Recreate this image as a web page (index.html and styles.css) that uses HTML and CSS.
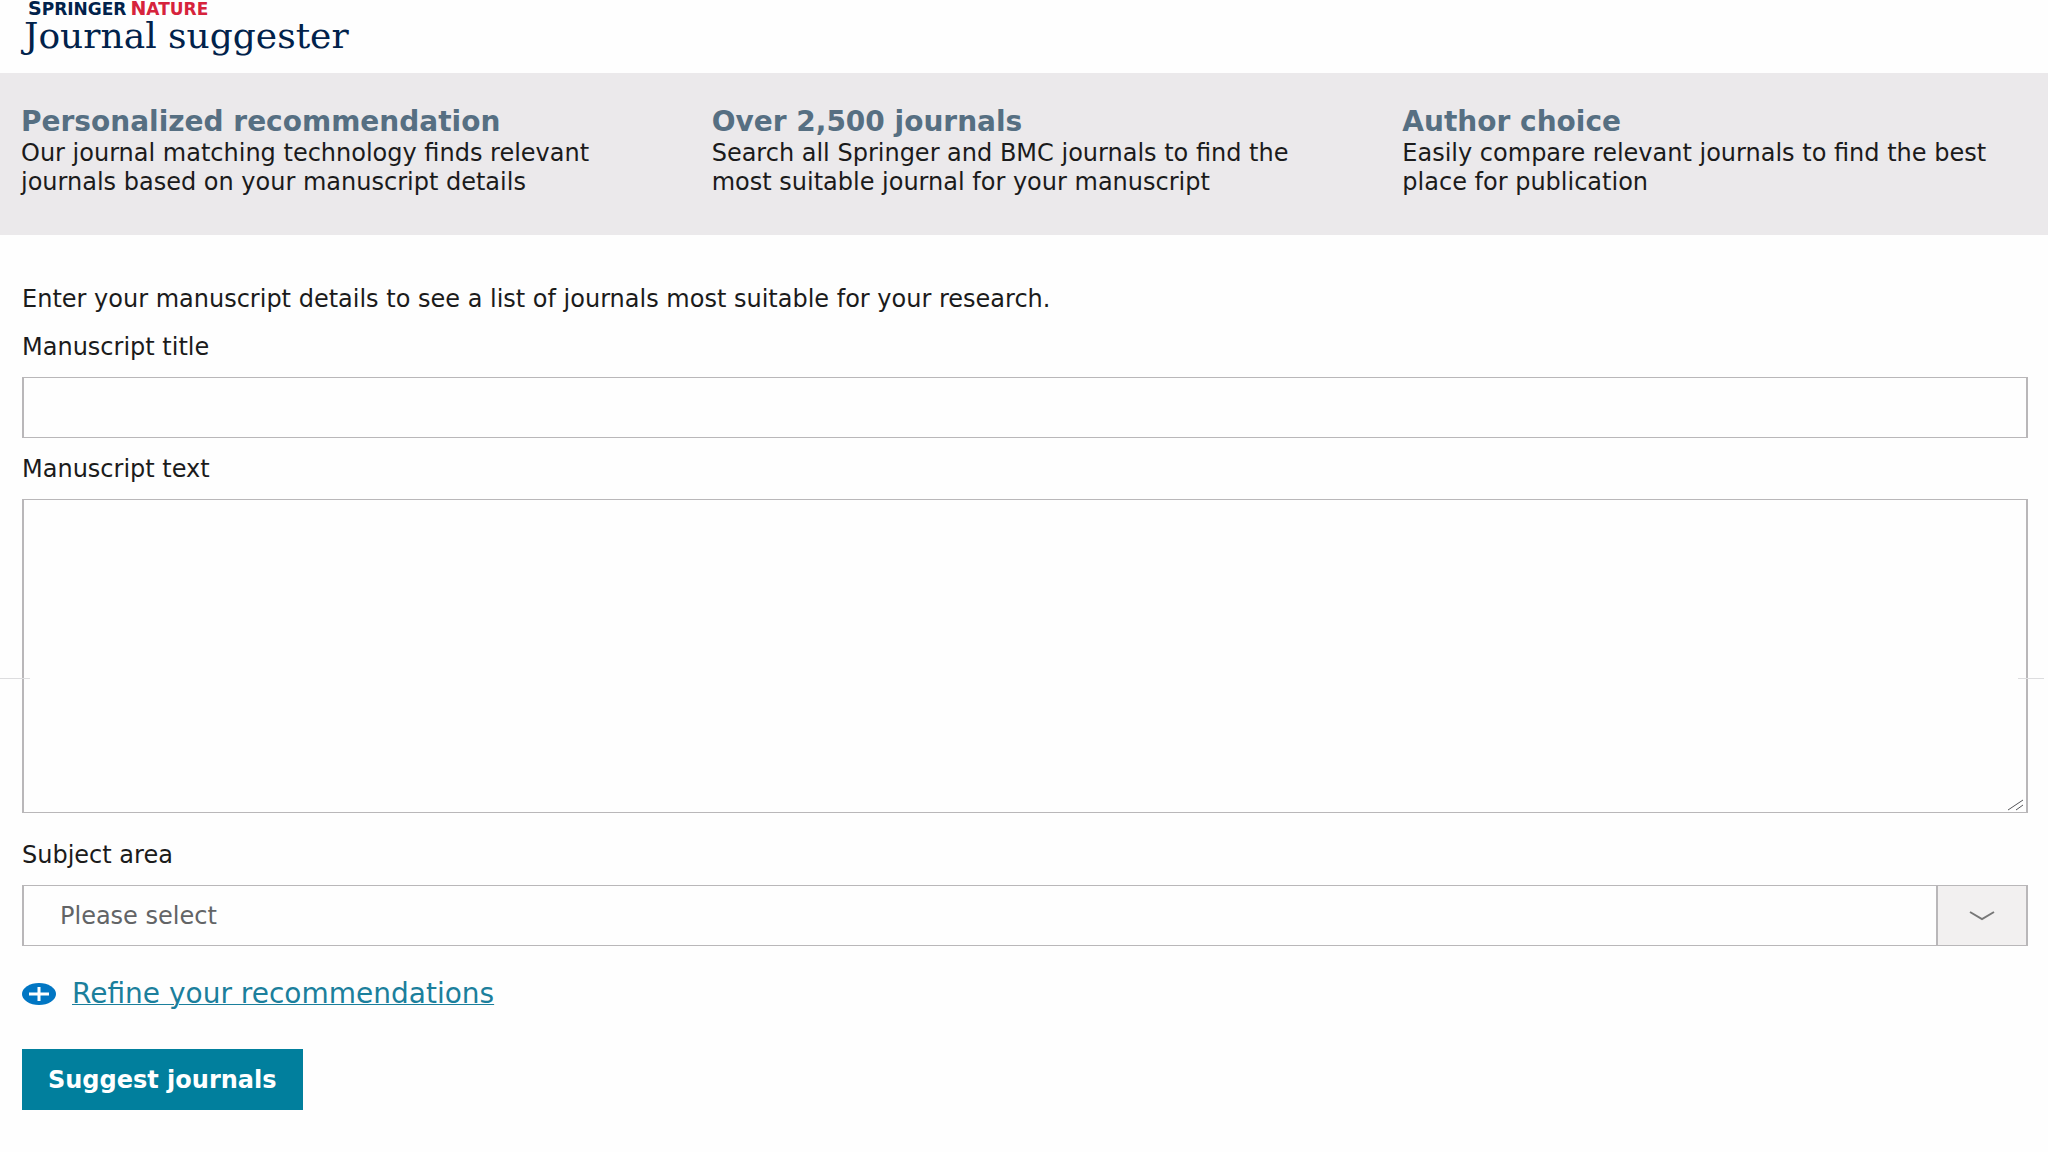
FILE: index.html
```html
<!DOCTYPE html>
<html lang="en">
<head>
    <meta charset="UTF-8">
    <meta name="viewport" content="width=device-width, initial-scale=1.0">
    <title>Journal suggester</title>
    <link rel="stylesheet" href="styles.css">
</head>
<body>
    <header class="site-header">
        <div class="brand">
            <span><span class="brand-initial">S</span>PRINGER</span>
            <span class="brand-nature"><span class="brand-initial">N</span>ATURE</span>
        </div>
        <h1 class="site-title">Journal suggester</h1>
    </header>

    <!-- Benefits band -->
    <section class="benefits">
        <div class="benefit">
            <h2>Personalized recommendation</h2>
            <p>Our journal matching technology finds relevant journals based on your manuscript details</p>
        </div>
        <div class="benefit">
            <h2>Over 2,500 journals</h2>
            <p>Search all Springer and BMC journals to find the most suitable journal for your manuscript</p>
        </div>
        <div class="benefit">
            <h2>Author choice</h2>
            <p>Easily compare relevant journals to find the best place for publication</p>
        </div>
    </section>

    <!-- Manuscript form -->
    <form class="manuscript-form">
        <p class="intro">Enter your manuscript details to see a list of journals most suitable for your research.</p>

        <label for="title">Manuscript title</label>
        <input class="field" type="text" id="title" name="title">

        <label for="text">Manuscript text</label>
        <div class="text-wrap">
            <textarea class="field" id="text" name="text"></textarea>
            <svg class="resize-grip" width="18" height="12" viewBox="0 0 18 12" aria-hidden="true">
                <path d="M1 11 L16 1 M9 11 L16 6"></path>
            </svg>
        </div>

        <label for="subject">Subject area</label>
        <div class="select-wrap">
            <select class="field" id="subject" name="subject">
                <option>Please select</option>
            </select>
            <span class="select-arrow">
                <svg width="26" height="10" viewBox="0 0 26 10" aria-hidden="true">
                    <path d="M1 1 L13 8 L25 1"></path>
                </svg>
            </span>
        </div>

        <div class="refine">
            <svg width="34" height="22" viewBox="0 0 34 22" aria-hidden="true">
                <ellipse cx="17" cy="11" rx="17" ry="11"></ellipse>
                <path d="M7 11 H27 M17 4 V18"></path>
            </svg>
            <a href="#refine">Refine your recommendations</a>
        </div>

        <button class="submit-button" type="submit">Suggest journals</button>
    </form>
</body>
</html>
```
FILE: styles.css
```css
/* Reset CSS */
* {
    margin: 0;
    padding: 0;
    box-sizing: border-box;
}
body {
    font-family: "DejaVu Sans", sans-serif;
    font-size: 24px;
    line-height: 29px;
    color: #1b1b1b;
    background: #fefefe;
}
/* Header */
.site-header {
    padding: 0 24px 18px;
    color: #01224b;
}
.brand {
    display: flex;
    align-items: baseline;
    gap: 4px;
    padding-left: 4px;
    font-size: 17px;
    font-weight: bold;
    line-height: 16px;
}
.brand-initial {
    font-size: 19px;
}
.brand-nature {
    color: #d6233c;
}
.site-title {
    font-family: "DejaVu Serif", serif;
    font-size: 36px;
    font-weight: normal;
    line-height: 38px;
}
/* Benefits band */
.benefits {
    display: grid;
    grid-template-columns: repeat(3, 1fr);
    gap: 66px;
    padding: 32px 21px 38px;
    background: #ebe9eb;
}
.benefit h2 {
    font-size: 28px;
    line-height: 34px;
    color: #566f82;
}
/* Form */
.manuscript-form {
    padding: 50px 20px 42px 22px;
}
.intro {
    margin-bottom: 19px;
}
.manuscript-form label {
    display: block;
    margin-bottom: 15px;
}
.field {
    display: block;
    width: 100%;
    height: 61px;
    border: solid #b9b7b9;
    border-width: 1px 2px;
    background: #fefefe;
    font-family: inherit;
    font-size: 24px;
    color: #626466;
}
input.field {
    margin-bottom: 17px;
    padding: 0 16px;
}
/* Manuscript text box */
.text-wrap {
    position: relative;
    margin-bottom: 28px;
}
textarea.field {
    height: 314px;
    padding: 16px;
    resize: none;
}
.text-wrap::before,
.text-wrap::after {
    content: "";
    position: absolute;
    top: 179px;
    height: 1px;
    background: #dddddf;
}
.text-wrap::before {
    left: -22px;
    width: 30px;
}
.text-wrap::after {
    right: -16px;
    width: 26px;
}
.resize-grip {
    position: absolute;
    right: 3px;
    bottom: 2px;
    fill: none;
    stroke: #55565a;
}
/* Subject drop-down */
.select-wrap {
    position: relative;
    margin-bottom: 33px;
}
select.field {
    padding: 0 110px 0 36px;
    border-radius: 0;
    appearance: none;
}
.select-arrow {
    position: absolute;
    top: 1px;
    right: 2px;
    bottom: 1px;
    width: 90px;
    display: flex;
    align-items: center;
    justify-content: center;
    border-left: 2px solid #b9b7b9;
    background: #f2f0f0;
    pointer-events: none;
}
.select-arrow path {
    fill: none;
    stroke: #777777;
    stroke-width: 2;
}
/* Refine link */
.refine {
    display: flex;
    align-items: center;
    gap: 16px;
    margin-bottom: 41px;
    font-size: 28px;
}
.refine ellipse {
    fill: #0176c3;
}
.refine path {
    stroke: #ffffff;
    stroke-width: 3;
}
.refine a {
    color: #1b7f9c;
    text-decoration-thickness: 1px;
}
/* Submit */
.submit-button {
    height: 61px;
    padding: 0 26px;
    border: none;
    background: #017f9d;
    font-family: inherit;
    font-size: 24px;
    font-weight: bold;
    color: #ffffff;
    cursor: pointer;
}
```
